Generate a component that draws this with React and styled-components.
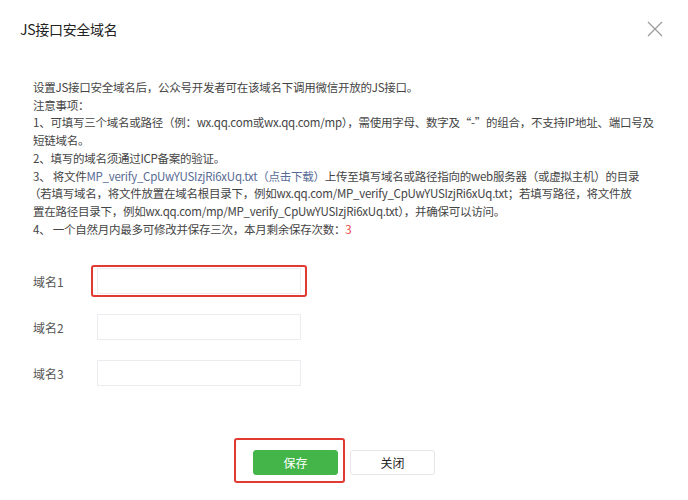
import React from "react";
import styled, { createGlobalStyle } from "styled-components";

const GlobalStyle = createGlobalStyle`
  html, body {
    margin: 0;
    padding: 0;
    background: #fff;
  }
  body {
    font-family: "Noto Sans CJK SC", "Liberation Sans", sans-serif;
    color: #353535;
  }
`;

const Dialog = styled.div`
  width: 688px;
  height: 500px;
  background: #fff;
  display: flex;
  flex-direction: column;
`;

const Header = styled.div`
  height: 58px;
  display: flex;
  align-items: center;
  justify-content: space-between;
  padding: 0 24px 0 20px;
  box-sizing: border-box;
`;

const Title = styled.h3`
  margin: 0;
  font-size: 14px;
  font-weight: 400;
  color: #222;
  letter-spacing: -0.3px;
`;

const CloseIcon = styled.button`
  width: 18px;
  height: 18px;
  padding: 0;
  border: 0;
  background: none;
  display: flex;
`;

const Body = styled.div`
  padding: 21px 20px 0 33px;
`;

const Notes = styled.div`
  font-size: 11.5px;
  line-height: 17.7px;
  color: #444;
  letter-spacing: -0.25px;
`;

const Line = styled.p`
  margin: 0 0 0 ${(p) => p.$indent || 0}px;
  white-space: nowrap;
`;

const FileLink = styled.a`
  color: #576b95;
  text-decoration: none;
`;

const Count = styled.span`
  color: #e64340;
`;

const Form = styled.div`
  margin-top: 30px;
  display: flex;
  flex-direction: column;
  gap: 20px;
`;

const Row = styled.div`
  display: flex;
  align-items: center;
  height: 26px;
`;

const Label = styled.label`
  width: 64px;
  font-size: 12px;
  color: #555;
`;

const Highlight = styled.div`
  display: flex;
  border: 2px solid ${(p) => (p.$on ? "#e03a32" : "transparent")};
  border-radius: 3px;
  padding: ${(p) => p.$pad};
  margin: ${(p) => p.$margin};
`;

const Input = styled.input`
  width: 204px;
  height: 26px;
  box-sizing: border-box;
  border: 1px solid #ececf0;
  outline: none;
  padding: 0 8px;
  font-size: 12px;
`;

const Footer = styled.div`
  margin-top: auto;
  margin-bottom: 25px;
  display: flex;
  justify-content: center;
  align-items: flex-end;
  gap: 12px;
`;

const Button = styled.button`
  width: 85px;
  height: 25px;
  border-radius: 3px;
  font-size: 12px;
  font-family: inherit;
  cursor: pointer;
  border: 1px solid ${(p) => (p.$primary ? "#44b549" : "#e7e7eb")};
  background: ${(p) => (p.$primary ? "#44b549" : "#fff")};
  color: ${(p) => (p.$primary ? "#fff" : "#222")};
`;

const domains = ["域名1", "域名2", "域名3"];

export default function App() {
  return (
    <>
      <GlobalStyle />
      <Dialog>
        <Header>
          <Title>JS接口安全域名</Title>
          <CloseIcon aria-label="关闭">
            <svg width="18" height="18" viewBox="0 0 18 18">
              <path
                d="M2 2 L16 16 M16 2 L2 16"
                stroke="#9a9a9a"
                strokeWidth="1.2"
                fill="none"
              />
            </svg>
          </CloseIcon>
        </Header>
        <Body>
          <Notes>
            <Line>设置JS接口安全域名后，公众号开发者可在该域名下调用微信开放的JS接口。</Line>
            <Line>注意事项：</Line>
            <Line>
              1、可填写三个域名或路径（例：wx.qq.com或wx.qq.com/mp），需使用字母、数字及“-”的组合，不支持IP地址、端口号及
            </Line>
            <Line>短链域名。</Line>
            <Line>2、填写的域名须通过ICP备案的验证。</Line>
            <Line>
              3、 将文件
              <FileLink href="#">MP_verify_CpUwYUSIzjRi6xUq.txt（点击下载）</FileLink>
              上传至填写域名或路径指向的web服务器（或虚拟主机）的目录
            </Line>
            <Line $indent={-4}>
              （若填写域名，将文件放置在域名根目录下，例如wx.qq.com/MP_verify_CpUwYUSIzjRi6xUq.txt；若填写路径，将文件放
            </Line>
            <Line>置在路径目录下，例如wx.qq.com/mp/MP_verify_CpUwYUSIzjRi6xUq.txt），并确保可以访问。</Line>
            <Line>
              4、 一个自然月内最多可修改并保存三次，本月剩余保存次数：<Count>3</Count>
            </Line>
          </Notes>
          <Form>
            {domains.map((name, i) => (
              <Row key={name}>
                <Label>{name}</Label>
                <Highlight
                  $on={i === 0}
                  $pad="1px 4px 1px 4px"
                  $margin="0 0 0 -6px"
                >
                  <Input />
                </Highlight>
              </Row>
            ))}
          </Form>
        </Body>
        <Footer>
          <Highlight $on $pad="10px 5px 6px 17px" $margin="0 -7px -8px -19px">
            <Button $primary>保存</Button>
          </Highlight>
          <Button>关闭</Button>
        </Footer>
      </Dialog>
    </>
  );
}
